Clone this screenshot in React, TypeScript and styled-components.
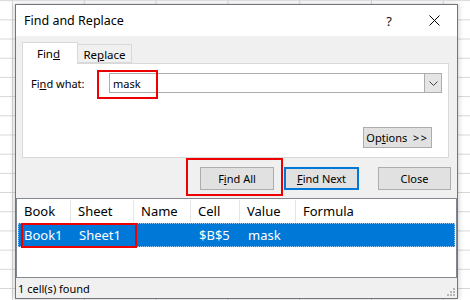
import styled, { createGlobalStyle } from "styled-components";

const GlobalStyle = createGlobalStyle`
  html, body {
    margin: 0;
    padding: 0;
  }
  body {
    font-family: "Noto Sans", "Segoe UI", sans-serif;
    background-color: #ffffff;
    background-image:
      linear-gradient(to right, #d6d6d6 1px, transparent 1px),
      linear-gradient(to bottom, #d6d6d6 1px, transparent 1px);
    background-size: 71.8px 19.2px;
    background-position: 12px 0px, 0 0.2px;
  }
`;

const columns = [
  { key: "book", label: "Book", width: "54px" },
  { key: "sheet", label: "Sheet", width: "63px" },
  { key: "name", label: "Name", width: "57px" },
  { key: "cell", label: "Cell", width: "49px" },
  { key: "value", label: "Value", width: "56px" },
  { key: "formula", label: "Formula", width: "1fr" },
];

const results = [
  { book: "Book1", sheet: "Sheet1", name: "", cell: "$B$5", value: "mask", formula: "" },
];

const gridTemplate = columns.map((c) => c.width).join(" ");

const App = () => {
  return (
    <Page>
      <GlobalStyle />
      <Dialog>
        <TitleBar>
          <Title>Find and Replace</Title>
          <HelpButton>?</HelpButton>
          <CloseButton>
            <svg width="11" height="11" viewBox="0 0 11 11">
              <path d="M0.5 0.5 L10.5 10.5 M10.5 0.5 L0.5 10.5" stroke="#000" strokeWidth="1" />
            </svg>
          </CloseButton>
        </TitleBar>

        <Body>
          <Tabs>
            <Tab $active>
              Fin<u>d</u>
            </Tab>
            <Tab>
              Re<u>p</u>lace
            </Tab>
          </Tabs>
          <Panel>
            <FindRow>
              <FieldLabel>
                Fi<u>n</u>d what:
              </FieldLabel>
              <ComboWrap>
                <Combo>
                  <ComboText>mask</ComboText>
                  <ComboArrow>
                    <svg width="9" height="5" viewBox="0 0 9 5">
                      <path d="M0.5 0.5 L4.5 4.5 L8.5 0.5" stroke="#444" strokeWidth="1" fill="none" />
                    </svg>
                  </ComboArrow>
                </Combo>
                <Highlight $left={-12} $top={-3} $width={61} $height={29} />
              </ComboWrap>
            </FindRow>
            <OptionsRow>
              <Button $width={69} $height={21}>
                Op<u>t</u>ions <Arrows>&gt;&gt;</Arrows>
              </Button>
            </OptionsRow>
          </Panel>

          <ButtonRow>
            <ButtonSlot>
              <Button $width={74}>
                F<u>i</u>nd All
              </Button>
              <Highlight $left={-14} $top={-9} $width={97} $height={38} />
            </ButtonSlot>
            <Button $width={75} $primary>
              <u>F</u>ind Next
            </Button>
            <CloseSlot>
              <Button $width={73}>Close</Button>
            </CloseSlot>
          </ButtonRow>

          <ResultList>
            <HeaderRow>
              {columns.map((c, i) => (
                <HeaderCell key={c.key} $last={i === columns.length - 1}>
                  {c.label}
                </HeaderCell>
              ))}
            </HeaderRow>
            {results.map((r) => (
              <ResultRow key={r.cell}>
                <Cell>{r.book}</Cell>
                <Cell>{r.sheet}</Cell>
                <Cell>{r.name}</Cell>
                <Cell>{r.cell}</Cell>
                <Cell>{r.value}</Cell>
                <Cell>{r.formula}</Cell>
                <Highlight $left={2} $top={-1} $width={116} $height={25} />
              </ResultRow>
            ))}
          </ResultList>

          <StatusBar>
            <span>1 cell(s) found</span>
            <Grip>
              <svg width="10" height="10" viewBox="0 0 10 10">
                <rect x="7" y="1" width="2" height="2" fill="#b5b5b5" />
                <rect x="4" y="4" width="2" height="2" fill="#b5b5b5" />
                <rect x="7" y="4" width="2" height="2" fill="#b5b5b5" />
                <rect x="1" y="7" width="2" height="2" fill="#b5b5b5" />
                <rect x="4" y="7" width="2" height="2" fill="#b5b5b5" />
                <rect x="7" y="7" width="2" height="2" fill="#b5b5b5" />
              </svg>
            </Grip>
          </StatusBar>
        </Body>
      </Dialog>
    </Page>
  );
};

export default App;

const Page = styled.div`
  width: 470px;
  height: 300px;
  padding: 4px 0 0 15px;
  box-sizing: border-box;
  overflow: hidden;
`;

const Dialog = styled.div`
  width: 443px;
  height: 295px;
  box-sizing: border-box;
  border: 1px solid #74747c;
  background: #f0f0f0;
  display: flex;
  flex-direction: column;
  box-shadow: -2px 0 4px rgba(0, 0, 0, 0.12), 2px 0 4px rgba(0, 0, 0, 0.12);
`;

const TitleBar = styled.div`
  height: 31px;
  flex-shrink: 0;
  background: #ffffff;
  display: flex;
  align-items: center;
  padding-left: 8px;
`;

const Title = styled.div`
  flex: 1;
  font-size: 12.5px;
  color: #000;
`;

const HelpButton = styled.div`
  width: 16px;
  text-align: center;
  font-size: 13px;
  color: #111;
  margin-right: 32px;
`;

const CloseButton = styled.div`
  width: 11px;
  height: 11px;
  display: flex;
  margin-right: 17px;
`;

const Body = styled.div`
  flex: 1;
  display: flex;
  flex-direction: column;
  font-size: 11px;
  color: #000;

  u {
    text-decoration: underline;
    text-underline-offset: 1px;
  }
`;

const Tabs = styled.div`
  display: flex;
  align-items: flex-end;
  height: 21px;
  margin-top: 6px;
  padding-left: 6px;
  position: relative;
  z-index: 1;
`;

const Tab = styled.div<{ $active?: boolean }>`
  box-sizing: border-box;
  height: ${({ $active }) => ($active ? "22px" : "19px")};
  width: ${({ $active }) => ($active ? "56px" : "54px")};
  margin-bottom: ${({ $active }) => ($active ? "-1px" : "0")};
  border: 1px solid #d9d9d9;
  border-bottom: ${({ $active }) => ($active ? "none" : "1px solid #d9d9d9")};
  border-left: ${({ $active }) => ($active ? "1px solid #d9d9d9" : "none")};
  background: ${({ $active }) => ($active ? "#ffffff" : "#f0f0f0")};
  display: flex;
  align-items: center;
  justify-content: center;
  font-size: 11.5px;
  padding-top: ${({ $active }) => ($active ? "0" : "1px")};
  padding-right: ${({ $active }) => ($active ? "3px" : "0")};
`;

const Panel = styled.div`
  box-sizing: border-box;
  width: 427px;
  height: 95px;
  margin-left: 6px;
  background: #ffffff;
  border: 1px solid #d9d9d9;
  display: flex;
  flex-direction: column;
  padding: 9px 5px 9px 8px;
`;

const FindRow = styled.div`
  display: flex;
  align-items: center;
`;

const FieldLabel = styled.div`
  width: 78px;
  font-size: 11px;
`;

const ComboWrap = styled.div`
  position: relative;
`;

const Combo = styled.div`
  box-sizing: border-box;
  width: 333px;
  height: 20px;
  border: 1px solid #adadad;
  background: #fff;
  display: flex;
  align-items: center;
`;

const ComboText = styled.div`
  flex: 1;
  padding-left: 3px;
  font-size: 11px;
`;

const ComboArrow = styled.div`
  box-sizing: border-box;
  width: 17px;
  height: 18px;
  background: #e5e5e5;
  border-left: 1px solid #adadad;
  display: flex;
  align-items: center;
  justify-content: center;
`;

const OptionsRow = styled.div`
  margin-top: auto;
  display: flex;
  justify-content: flex-end;
  padding-right: 11px;
`;

const Arrows = styled.span`
  letter-spacing: 1.5px;
  margin-left: 3px;
`;

const Button = styled.div<{ $width: number; $height?: number; $primary?: boolean }>`
  box-sizing: border-box;
  width: ${({ $width }) => $width}px;
  height: ${({ $height }) => $height ?? 23}px;
  background: #e1e1e1;
  border: ${({ $primary }) => ($primary ? "2px solid #0078d7" : "1px solid #adadad")};
  display: flex;
  align-items: center;
  justify-content: center;
  font-size: 11px;
  color: #000;
  white-space: pre;
`;

const ButtonRow = styled.div`
  display: flex;
  justify-content: flex-end;
  gap: 10px;
  margin-top: 9px;
  padding-right: 6px;
`;

const ButtonSlot = styled.div`
  position: relative;
`;

const CloseSlot = styled.div`
  margin-left: 9px;
`;

const Highlight = styled.div<{ $left: number; $top: number; $width: number; $height: number }>`
  position: absolute;
  left: ${({ $left }) => $left}px;
  top: ${({ $top }) => $top}px;
  width: ${({ $width }) => $width}px;
  height: ${({ $height }) => $height}px;
  box-sizing: border-box;
  border: 2px solid #ee0000;
  pointer-events: none;
`;

const ResultList = styled.div`
  box-sizing: border-box;
  height: 80px;
  margin-top: 8px;
  background: #fff;
  border: 1px solid #828790;
  padding: 1px 0 0 0;
`;

const HeaderRow = styled.div`
  display: grid;
  grid-template-columns: ${gridTemplate};
  height: 23px;
`;

const HeaderCell = styled.div<{ $last?: boolean }>`
  display: flex;
  align-items: center;
  padding-left: 7px;
  font-size: 13px;
  border-right: ${({ $last }) => ($last ? "none" : "1px solid #e5e5e5")};
  margin-bottom: 1px;
`;

const ResultRow = styled.div`
  position: relative;
  display: grid;
  grid-template-columns: ${gridTemplate};
  height: 24px;
  box-sizing: border-box;
  margin: 0 0 0 1px;
  width: 437px;
  background: #0078d7;
  border: 1px dotted #9fc9f0;
  color: #fff;
`;

const Cell = styled.div`
  display: flex;
  align-items: center;
  padding-left: 6px;
  font-size: 13px;
  &:first-child {
    padding-left: 5px;
  }
`;

const StatusBar = styled.div`
  height: 20px;
  display: flex;
  align-items: center;
  justify-content: space-between;
  padding-left: 2px;
  font-size: 11px;
`;

const Grip = styled.div`
  display: flex;
  align-self: flex-end;
  margin: 0 1px 1px 0;
`;
